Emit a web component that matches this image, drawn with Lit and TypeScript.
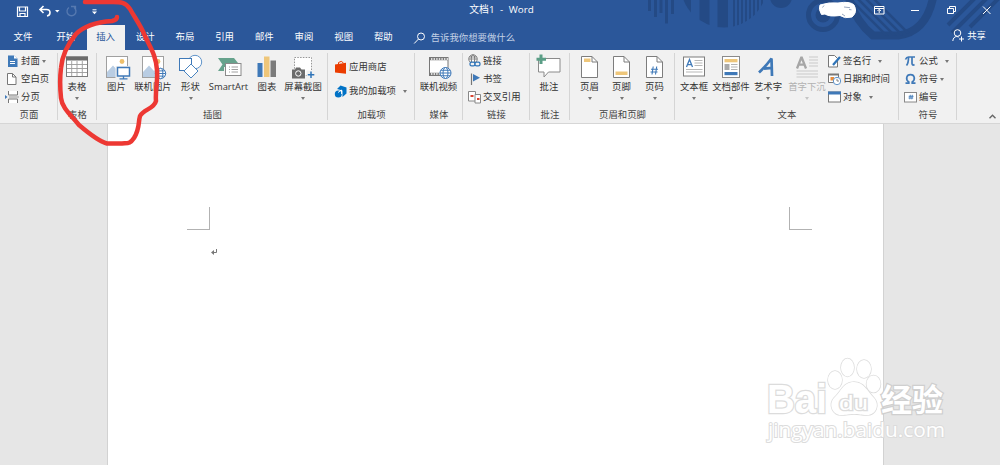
import { LitElement, html, svg, css, TemplateResult } from "lit";
import { customElement } from "lit/decorators.js";

const page = (extra: TemplateResult) => svg`
  <path d="M6.500 2.500h10.500l5.500 5.500v15.500H6.500z" fill="#fff" stroke="#7d7d7d"/>
  <path d="M17 2.500v5.500h5.500" fill="none" stroke="#7d7d7d"/>${extra}`;
const globe = (x: number, y: number, r = 5) => svg`
  <g transform="translate(${x} ${y})" fill="#fff" stroke="#3f79b8" stroke-width="1">
    <circle r=${r}/><ellipse rx=${r * 0.45} ry=${r}/><path d="M${-r} 0H${r}M${-r * 0.85} ${-r * 0.5}H${r * 0.85}M${-r * 0.85} ${r * 0.5}H${r * 0.85}"/>
  </g>`;
const photo = svg`
  <rect x="4.500" y="2.500" width="21" height="21" fill="#fff" stroke="#a0a0a0"/>
  <path d="M5 23v-5l6-6.500 5 5.500 2-2 7 6v2z" fill="#b9cde3"/><circle cx="20" cy="7.500" r="2.400" fill="#eebf6b"/>`;

const big: Record<string, TemplateResult> = {
  table: svg`<rect x="4.500" y="3" width="21" height="19.500" fill="#fff" stroke="#7b7b7b"/><rect x="4" y="2.500" width="22" height="4" fill="#6b6b6b"/>
    <path d="M9.700 7v15M15 7v15M20.300 7v15M5 10.500h20M5 14.500h20M5 18.500h20" stroke="#9a9a9a" stroke-width=".9"/>`,
  picture: svg`${photo}<rect x="13.500" y="12" width="15" height="12" fill="#f1f1f1"/><rect x="15.500" y="13.500" width="12" height="8.500" fill="#fff" stroke="#3f79b8" stroke-width="1.500"/><path d="M21.500 22v2.500M17.500 24.800h8" stroke="#3f79b8" stroke-width="1.300"/>`,
  online: svg`${photo}${globe(22.500, 19.500, 5.200)}`,
  shapes: svg`<circle cx="19" cy="8" r="6.700" fill="#fff" stroke="#5f93c9"/><rect x="3.500" y="4.500" width="12" height="12" fill="#fff" stroke="#3f79b8"/><path d="M15 10l7 7-7 7-7-7z" fill="#fff" stroke="#4a84c0"/>`,
  smart: svg`<path d="M4 4h16l4 5-3 4H10v4H4l4.500-6.500z" fill="#66a28c"/><rect x="11.500" y="9.500" width="15.500" height="12" fill="#fff" stroke="#8a8a8a"/><path d="M15 13h1M17.500 13h6.500M15 15.500h1M17.500 15.500h6.500M15 18h1M17.500 18h6.500" stroke="#888" stroke-width=".8"/>`,
  chart: svg`<path d="M5.500 9h5v14h-5z" fill="#3f79b8"/><path d="M12 2.500h5.500V23H12z" fill="#eec67a"/><path d="M18.500 6.500h5.500V23h-5.500z" fill="#7b7b7b"/>`,
  shot: svg`<rect x="6.500" y="3.500" width="17" height="18" fill="#fff" stroke="#8a8a8a" stroke-width=".9" stroke-dasharray="1.500 1.300"/>
    <path d="M4 15.500v9H17v-9h-3.500l-1.500-2h-4l-1 2z" fill="#6b6b6b"/><circle cx="10.300" cy="19.500" r="2.700" fill="#6b6b6b" stroke="#fff"/><path d="M18.500 16.500h8v8h-8z" fill="#f1f1f1"/><path d="M23 17.500v6.500M19.800 20.700h6.500" stroke="#2f74b8" stroke-width="1.500"/>`,
  video: svg`<rect x="5.500" y="3.500" width="18.500" height="18" fill="#fff" stroke="#777"/><path d="M6 5h18M6 20h18" stroke="#777" stroke-width="2.400"/><path d="M7 5h17M7 20h17" stroke="#fff" stroke-width="1.500" stroke-dasharray="1.400 1.200"/>${globe(21.500, 19, 5.500)}`,
  comment: svg`<path d="M4.500 4.500h21.500v13.500h-11.500l-4.500 5v-5h-5.500z" fill="#fff" stroke="#8a8a8a"/><path d="M7 .5v9.500M2.500 5.200h9.500" stroke="#5b9e86" stroke-width="3"/>`,
  header: page(svg`<path d="M9 4.500h6.500V8H9z" fill="#eec67a"/>`),
  footer: page(svg`<path d="M8.500 17.500h12V21h-12z" fill="#eec67a"/>`),
  number: page(svg`<path d="M13.200 12.500l-1.200 8M16.700 12.500l-1.200 8M11 15.200h7M10.500 18h7" stroke="#3f79b8" stroke-width="1.100"/>`),
  textbox: svg`<rect x="4.500" y="3" width="21" height="19" fill="#fff" stroke="#7d7d7d"/><path d="M7.500 13l3-7.500 3 7.500M8.500 10.700h4" fill="none" stroke="#3f79b8" stroke-width="1.300"/><path d="M15.500 6.500h8M15.500 9h8M15.500 11.500h8M7 15.500h16.500M7 18h16.500" stroke="#a5a5a5" stroke-width=".8"/>`,
  parts: svg`<rect x="6.500" y="2.500" width="17" height="21" fill="#fff" stroke="#8a8a8a"/><path d="M8.500 5h13v3.300h-13z" fill="#eec67a"/><path d="M8.500 10h5v6h-5z" fill="#aaa"/><path d="M15 10.500h6.500M15 13h6.500M15 15.500h6.500" stroke="#aaa" stroke-width=".9"/><path d="M8.500 18h13v3.200h-13z" fill="#3f79b8"/>`,
  wordart: svg`<path d="M6 18.500Q13 12 18.500 4.500L19 22M11 14.700l8-.8" fill="none" stroke="#3f79b8" stroke-width="2.700" stroke-linejoin="bevel"/>`,
  drop: svg`<path d="M5 14.500L9.500 3l4.500 11.500M6.500 10.700h6" fill="none" stroke="#a6a6a6" stroke-width="2.300" stroke-linejoin="bevel"/><path d="M17 3h9M17 6h9M17 9h9M17 12h9M4.500 17h21.500M4.500 20h21.500M4.500 23h21.500" stroke="#cacaca" stroke-width="1.100"/>`,
};

const small: Record<string, TemplateResult> = {
  cover: svg`<path d="M2 1.500h6l3.500 3v8.500H2z" fill="#3f79b8"/><path d="M8 1.500v3h3.500" fill="#fff"/><path d="M4 7.500h5M4 9.500h5" stroke="#fff"/>`,
  blank: svg`<path d="M1.500 1.500h5l3.500 3.500v7.500H1.500z" fill="#fff" stroke="#777"/><path d="M6.500 1.500v3.500H10" fill="none" stroke="#777"/>`,
  brk: svg`<path d="M2.500 1v4h9V1M2.500 13V9h9v4" fill="#fff" stroke="#777"/><path d="M3 7h10" stroke="#999"/><path d="M-1 5l2.500 2L-1 9z" fill="#3f79b8"/>`,
  store: svg`<path d="M1 4.500l11-1.700v11L1 12.500z" fill="#eb3c00"/><path d="M4.500 4V2.500Q7.500 0 9.500 3" fill="none" stroke="#eb3c00"/>`,
  addin: svg`<path d="M6.500 1.500L12.500 3.500V9.500L8.500 13V6.500L3 5z" fill="#0072c6"/><circle cx="4.300" cy="10" r="3.500" fill="#0072c6"/><path d="M4 8.500L7.500 6V10" fill="none" stroke="#fff" stroke-width=".9"/>`,
  link: svg`<circle cx="5" cy="5" r="4.200" fill="#fff" stroke="#777"/><ellipse cx="5" cy="5" rx="1.800" ry="4.200" fill="none" stroke="#777"/><path d="M1 5h8M1.500 3h7" stroke="#777" stroke-width=".8"/><rect x="2" y="8.200" width="5" height="3.600" rx="1.600" fill="#f1f1f1" stroke="#2f74b8" stroke-width="1.300"/><rect x="7" y="8.200" width="5" height="3.600" rx="1.600" fill="#f1f1f1" stroke="#2f74b8" stroke-width="1.300"/>`,
  flag: svg`<path d="M3.500 1.500v11.500" stroke="#777" stroke-width="1.200"/><path d="M5 2l7 3.700L5 9.500z" fill="#3f79b8"/>`,
  cross: svg`<path d="M.5 1.500h7v9.500h-7z" fill="#fff" stroke="#888"/><path d="M7 4.500h5.500v8.500H7z" fill="#fff" stroke="#888"/><path d="M2.500 6h3M9 9h2.500" stroke="#d8442f" stroke-width="1.800"/>`,
  sign: svg`<path d="M.5 1.500h6l3 3v8.500h-9z" fill="#fff" stroke="#777"/><path d="M5 11L12 3" stroke="#2f74b8" stroke-width="2.200"/>`,
  date: svg`<path d="M.5 2.500h10v8h-10z" fill="#fff" stroke="#777"/><path d="M0 2.500h11" stroke="#777" stroke-width="2"/><path d="M2.500 5h3.500v3.500H2.500z" fill="#e88b3a"/><circle cx="9" cy="9" r="3.700" fill="#fff" stroke="#5f93c9"/><path d="M9 6.800V9h2" fill="none" stroke="#777" stroke-width=".9"/>`,
  object: svg`<rect x=".5" y="2" width="12" height="10" fill="#fff" stroke="#777"/><path d="M0 1.500h13v3H0z" fill="#3f79b8"/>`,
  pi: svg`<path d="M1.500 5.500Q2.500 3 4.500 3h6.500M4.500 3.500Q4.500 9 2.500 11.500M8 3.500V9.500Q8.300 12 10.500 10.500" fill="none" stroke="#3f79b8" stroke-width="1.700"/>`,
  omega: svg`<path d="M1.500 11.200h3.300V10C1.300 7.500 2.300 2.700 6.500 2.700S11.700 7.500 8.200 10v1.200H11.500" fill="none" stroke="#3f79b8" stroke-width="1.700"/>`,
  numbering: svg`<rect x=".5" y="2.500" width="12" height="9.500" fill="#fff" stroke="#888"/><path d="M6.300 4.800l-.5 4.500M8.300 4.800l-.5 4.500M4.700 6.300H9.500M4.500 8H9.200" stroke="#3f79b8" stroke-width=".9"/>`,
};

interface BigItem { icon: string; label: string; w: number; arrow?: boolean; off?: boolean }
interface SmallItem { icon: string; label: string; gap?: number }
interface Group { label: string; w: number; pad?: number; big?: BigItem[]; rows?: SmallItem[]; kind?: string }

const groups: Group[] = [
  { label: "页面", w: 58, pad: 6, rows: [{ icon: "cover", label: "封面", gap: 2 }, { icon: "blank", label: "空白页" }, { icon: "brk", label: "分页" }] },
  { label: "表格", w: 39, big: [{ icon: "table", label: "表格", w: 38, arrow: true }] },
  { label: "插图", w: 231, pad: 2, big: [
    { icon: "picture", label: "图片", w: 35 }, { icon: "online", label: "联机图片", w: 38 },
    { icon: "shapes", label: "形状", w: 37, arrow: true }, { icon: "smart", label: "SmartArt", w: 39 },
    { icon: "chart", label: "图表", w: 38 }, { icon: "shot", label: "屏幕截图", w: 34, arrow: true }] },
  { label: "加载项", w: 87, pad: 6, kind: "two", rows: [{ icon: "store", label: "应用商店" }, { icon: "addin", label: "我的加载项", gap: 7 }] },
  { label: "媒体", w: 48, big: [{ icon: "video", label: "联机视频", w: 47 }] },
  { label: "链接", w: 67, pad: 5, rows: [{ icon: "link", label: "链接" }, { icon: "flag", label: "书签" }, { icon: "cross", label: "交叉引用" }] },
  { label: "批注", w: 40, big: [{ icon: "comment", label: "批注", w: 38 }] },
  { label: "页眉和页脚", w: 105, pad: 3.5, big: [
    { icon: "header", label: "页眉", w: 32, arrow: true }, { icon: "footer", label: "页脚", w: 32, arrow: true }, { icon: "number", label: "页码", w: 34, arrow: true }] },
  { label: "文本", w: 224, pad: 1, big: [
    { icon: "textbox", label: "文本框", w: 36, arrow: true }, { icon: "parts", label: "文档部件", w: 38, arrow: true },
    { icon: "wordart", label: "艺术字", w: 36, arrow: true }, { icon: "drop", label: "首字下沉", w: 42, arrow: true, off: true }],
    rows: [{ icon: "sign", label: "签名行", gap: 7 }, { icon: "date", label: "日期和时间" }, { icon: "object", label: "对象", gap: 7 }] },
  { label: "符号", w: 58, pad: 5, rows: [{ icon: "pi", label: "公式", gap: 7 }, { icon: "omega", label: "符号", gap: 2.5 }, { icon: "numbering", label: "编号" }] },
];

const tabs = ["开始", "插入", "设计", "布局", "引用", "邮件", "审阅", "视图", "帮助"];

@customElement("app-root")
export class AppRoot extends LitElement {
  static styles = css`
    :host { display: block; position: relative; width: 1000px; height: 465px; overflow: hidden; background: #e6e6e6;
      font: 9.4px/12px "Open Sans", "Noto Sans CJK SC", sans-serif; color: #333; white-space: nowrap; }
    svg { display: block; overflow: visible; flex: none; }
    .top { height: 50px; background: #2b579a; color: #fff; position: relative; }
    .deco { position: absolute; left: 0; top: 0; }
    .bar { position: relative; height: 25px; display: flex; align-items: flex-start; }
    .title { width: 737px; padding-top: 4px; text-align: center; font-size: 9.8px; word-spacing: 3px; }
    .tabs { position: relative; height: 25px; display: flex; }
    .tab { width: 39.7px; text-align: center; line-height: 24px; height: 25px; }
    .file { width: 46px; }
    .on { background: linear-gradient(#f1f1f1, #f1f1f1) 1px 0 / 38.500px 100% no-repeat; color: #2b579a; }
    .tell { display: flex; align-items: center; gap: 5px; margin-left: 10.500px; height: 25px; color: #c3d1e6; }
    .share { margin-left: auto; display: flex; align-items: center; gap: 3px; padding-right: 14px; height: 21px; }
    .ribbon { height: 73px; background: #f1f1f1; border-bottom: 1px solid #d6d6d6; display: flex; }
    .group { box-sizing: border-box; height: 73px; padding-top: 3px; background: linear-gradient(#d5d5d5, #d5d5d5) right 3px / 1px 67px no-repeat; }
    .body { display: flex; height: 54px; }
    .label { text-align: center; line-height: 16px; color: #444; }
    .big { display: flex; flex-direction: column; align-items: center; height: 54px; padding-top: 1px; box-sizing: border-box; }
    .big .txt { line-height: 12px; margin-top: 1px; }
    .off { color: #b1b1b1; }
    .arrow { width: 0; height: 0; border: 2.500px solid transparent; border-top: 3px solid #777; border-bottom: 0; }
    .big .arrow { margin-top: 3.500px; }
    .off .arrow { border-top-color: #c5c5c5; }
    .rows { display: flex; flex-direction: column; }
    .row { height: 18px; display: flex; align-items: center; gap: 1px; }
    .row span { padding-bottom: 2px; }
    .row svg { margin-bottom: 2px; }
    .row .arrow { margin-bottom: 1px; }
    .two { padding-top: 3px; }
    .two .row { height: 24px; }
    .collapse { margin: auto 4px 4px auto; }
    .work { height: 342px; display: flex; justify-content: center; padding-right: 9px; }
    .page { width: 775px; background: #fff; border: solid #d2d2d2; border-width: 0 1px; height: 342px; }
    .margins { display: flex; justify-content: space-between; padding: 83px 71px 0 79px; }
    .mark { width: 22px; height: 22px; border: 1px solid #b2b2b2; border-top: 0; }
    .l { border-left: 0; } .r { border-right: 0; }
    .caret { margin: 18px 0 0 102px; }
    .over { position: absolute; left: 0; top: 0; pointer-events: none; }
    .wm { font-family: "Liberation Sans", "Noto Sans CJK SC", sans-serif; fill: #fff; stroke: #dcdcdc; paint-order: stroke; }
    .wm .url { font-family: "Open Sans", sans-serif; }
  `;

  private row(r: SmallItem) {
    return html`<div class="row"><svg width="14" height="14">${small[r.icon]}</svg><span>${r.label}</span>
      ${r.gap ? html`<i class="arrow" style="margin-left:${r.gap - 1}px"></i>` : ""}</div>`;
  }

  private group(g: Group) {
    return html`<section class="group" style="width:${g.w}px">
      <div class="body" style="padding-left:${g.pad ?? 0}px">
        ${(g.big ?? []).map((b) => html`<div class="big ${b.off ? "off" : ""}" style="width:${b.w}px">
          <svg width="30" height="26">${big[b.icon]}</svg><span class="txt">${b.label}</span>
          ${b.arrow ? html`<i class="arrow"></i>` : ""}</div>`)}
        ${g.rows ? html`<div class="rows ${g.kind ?? ""}">${g.rows.map((r) => this.row(r))}</div>` : ""}
      </div>
      <div class="label">${g.label}</div>
    </section>`;
  }

  private deco() {
    const thin = [733, 737, 741, 745, 749, 753, 757, 761];
    return html`<svg class="deco" width="1000" height="50">
      <defs><clipPath id="d"><circle cx="724" cy="-16" r="43.500"/></clipPath>
      <clipPath id="c"><circle cx="893" cy="-8" r="44"/></clipPath></defs>
      <g fill="#244a85">
        <path d="M648 0h3v11h-3zM654 0h3v17h-3zM659.500 0h3v13h-3zM665 0h3v23.500h-3zM671 0h3v14h-3z"/>
        <g clip-path="url(#d)"><path d="M680 0h11v20h-11zM699.500 0h10v30h-10zM717.500 0h10.500v30h-10.500z"/>${thin.map((x) => svg`<rect x=${x} y="0" width="2" height="30"/>`)}</g>
        <circle cx="781" cy="-3" r="11"/><circle cx="823" cy="15" r="7.500"/>
      </g>
      <g fill="none" stroke="#244a85">
        <circle cx="823" cy="15" r="14.500" stroke-width="5"/>
        <path d="M849 -2Q856 22 873 35.500H898Q926 32 933 -2" stroke-width="8"/>
        <g clip-path="url(#c)" stroke-width="2.500"><path d="M856 -3l42 42M864 -3l42 42M872 -3l38 38M848 -3l40 40"/></g>
        <path d="M978 -5l-30 30M990 -5l-38 38M1002 -5l-32 32" stroke-width="4"/>
      </g>
    </svg>`;
  }

  render() {
    return html`
      <header class="top">${this.deco()}
        <div class="bar">
          <svg width="133" height="25" fill="none" stroke="#fff">
            <path d="M17.500 7h10v9.500h-10zM19.500 7v4h6V7M20 16.500v-3h5v3" stroke-width="1.200"/>
            <path d="M43.500 6L40 9.500l3.500 3.500M40.500 9.500h6q3.500 0 3.500 3t-3 3.500" stroke-width="1.600"/>
            <path d="M55 10h4.500l-2.200 2.500z" fill="#fff" stroke="none"/>
            <path d="M69 7.500a4.500 4.500 0 1 0 5 0M75.500 10.500V6.500H71" stroke="#5679b0" stroke-width="1.300"/>
            <path d="M92.500 9.800h4" /><path d="M92 11.500h5l-2.500 2.700z" fill="#fff" stroke="none"/>
          </svg>
          <div class="title">文档1 - Word</div>
        </div>
        <nav class="tabs">
          <div class="tab file">文件</div>
          ${tabs.map((t) => html`<div class="tab ${t === "插入" ? "on" : ""}">${t}</div>`)}
          <div class="tell"><svg width="12" height="12" fill="none" stroke="#fff"><circle cx="7" cy="4.500" r="3.500"/><path d="M4.500 7L.2 11.500"/></svg>告诉我你想要做什么</div>
          <div class="share"><svg width="12" height="13" fill="none" stroke="#fff"><circle cx="5.500" cy="4" r="3.300"/><path d="M.8 12q.5-4.300 4-4.500l2 .5M9.500 7.500v5M7 10h5"/></svg>共享</div>
        </nav>
        <svg class="deco" width="1000" height="25" fill="none" stroke="#fff">
          <path d="M820 5Q829 2 838 3Q850 1 854 5Q858 12 852 17Q845 19 840 15.500Q829 17 825 14L821.500 14.500Q818 9 820 5z" fill="#fff"/>
          <path d="M824 5.500l-1.500 2M844 7l6 .7M849 9.500l2.500.3M842 14l3 2" stroke="#6d83a5" stroke-width=".7"/>
          <path d="M874.500 6.500h9.500v7.500h-9.500zM874.500 8.500h9.500M879.200 13v-3.500M877.500 11l1.700-1.700 1.700 1.700"/>
          <path d="M911 10.500h8M947.500 8.500h6v5h-6zM949.500 8.500v-2h6v5h-2M983 6.500l7.500 7.500M990.500 6.500L983 14"/>
        </svg>
      </header>
      <div class="ribbon">${groups.map((g) => this.group(g))}
        <svg class="collapse" width="7" height="5" fill="none" stroke="#666" stroke-width="1.400"><path d="M.5 4.200l3-3 3 3"/></svg>
      </div>
      <main class="work"><div class="page">
        <div class="margins"><div class="mark l"></div><div class="mark r"></div></div>
        <svg class="caret" width="8" height="8" fill="none" stroke="#777"><path d="M6.500 1v3.500H3"/><path d="M4 2v5L1 4.500z" fill="#777" stroke="none"/></svg>
      </div></main>
      <svg class="over wm" width="1000" height="465">
        <g stroke-width="1.500">
          <text x="767" y="413" font-size="40" font-weight="700" textLength="60" lengthAdjust="spacingAndGlyphs" stroke-width="2.500">Bai</text>
          <ellipse cx="835" cy="380" rx="7" ry="9"/><ellipse cx="847.500" cy="367.500" rx="6.500" ry="9"/><ellipse cx="864" cy="369" rx="7" ry="9"/><ellipse cx="873.500" cy="384" rx="7" ry="8.500"/>
          <path d="M854 382C843 382 841 392 834 398C828 405 833 415 841 415C847 415 849 414 854 414S861 415 867 415C876 415 880 405 874 398C867 391 864 382 854 382z"/>
          <text x="839" y="410" font-size="21" textLength="29" lengthAdjust="spacingAndGlyphs" stroke-width="2.500">du</text>
          <text x="881" y="411" font-size="31" font-weight="700" stroke-width="2.500" stroke="#cfcfcf">经验</text>
          <text class="url" x="768" y="437" font-size="20" textLength="177" lengthAdjust="spacingAndGlyphs" stroke-width="2">jingyan.baidu.com</text>
        </g>
      </svg>
      <svg class="over" width="1000" height="465" fill="none" stroke="#ed3833" stroke-width="4.500" stroke-linecap="round" stroke-linejoin="round">
        <path d="M85 2H113C121 2 125 2 130 9C135 18 141 26 145 36C150 47 156 55 157 70C158 82 155 91 156 101C154 109 144 109 140 116C138 123 140 128 134 138C130 144 128 143 122 143.500H107C98 141 86 131 79 125C71 115 62 108 61 98C60 88 60 76 61 68C62 57 67 45 76 34C84 26 98 22 112 21Q117 20 117 17"/>
      </svg>`;
  }
}
